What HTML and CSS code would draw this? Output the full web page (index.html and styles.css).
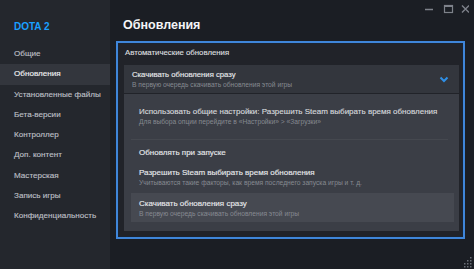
FILE: index.html
```html
<!DOCTYPE html>
<html lang="ru">
<head>
<meta charset="utf-8">
<link rel="stylesheet" href="styles.css">
</head>
<body>
<div class="app">
  <aside class="sidebar">
    <div class="game">DOTA 2</div>
    <nav class="nav">
      <div class="nav-item">Общие</div>
      <div class="nav-item active">Обновления</div>
      <div class="nav-item">Установленные файлы</div>
      <div class="nav-item">Бета-версии</div>
      <div class="nav-item">Контроллер</div>
      <div class="nav-item">Доп. контент</div>
      <div class="nav-item">Мастерская</div>
      <div class="nav-item">Запись игры</div>
      <div class="nav-item">Конфиденциальность</div>
    </nav>
  </aside>
  <main class="main">
    <h1 class="title">Обновления</h1>
    <section class="box">
      <div class="label">Автоматические обновления</div>
      <div class="dropdown">
        <div class="opt-title">Скачивать обновления сразу</div>
        <div class="opt-sub">В первую очередь скачивать обновления этой игры</div>
        <svg class="chevron" width="10" height="7" viewBox="0 0 10 7"><path d="M1.5 1.5 L5 5 L8.5 1.5" fill="none" stroke="#2f8fe6" stroke-width="2"/></svg>
      </div>
      <div class="menu">
        <div class="item first">
          <div class="opt-title">Использовать общие настройки: Разрешить Steam выбирать время обновления</div>
          <div class="opt-sub">Для выбора опции перейдите в «Настройки» &gt; «Загрузки»</div>
        </div>
        <div class="sep"></div>
        <div class="item">
          <div class="opt-title">Обновлять при запуске</div>
        </div>
        <div class="item">
          <div class="opt-title">Разрешить Steam выбирать время обновления</div>
          <div class="opt-sub">Учитываются такие факторы, как время последнего запуска игры и т. д.</div>
        </div>
        <div class="item selected">
          <div class="opt-title">Скачивать обновления сразу</div>
          <div class="opt-sub">В первую очередь скачивать обновления этой игры</div>
        </div>
      </div>
    </section>
  </main>
  <div class="controls">
    <svg width="48" height="12" viewBox="0 0 48 12">
      <path d="M4 6.5 H12" stroke="#7e828a" stroke-width="1.5"/>
      <rect x="23.5" y="2.5" width="8" height="7" fill="none" stroke="#7e828a" stroke-width="1.2"/>
      <path d="M23.5 3.2 H31.5" stroke="#7e828a" stroke-width="1.6"/>
      <path d="M41 2.5 L48 9.5 M48 2.5 L41 9.5" stroke="#7e828a" stroke-width="1.4"/>
    </svg>
  </div>
  <svg class="grip" width="10" height="12" viewBox="0 0 10 12">
    <g fill="#6b6f77">
      <rect x="8" y="1" width="1.5" height="1.5"/>
      <rect x="5" y="4" width="1.5" height="1.5"/><rect x="8" y="4" width="1.5" height="1.5"/>
      <rect x="2" y="7" width="1.5" height="1.5"/><rect x="5" y="7" width="1.5" height="1.5"/><rect x="8" y="7" width="1.5" height="1.5"/>
      <rect x="2" y="10" width="1.5" height="1.5"/><rect x="5" y="10" width="1.5" height="1.5"/><rect x="8" y="10" width="1.5" height="1.5"/>
    </g>
  </svg>
</div>
</body>
</html>
```
FILE: styles.css
```css
* { box-sizing: border-box; margin: 0; padding: 0; }
html, body { width: 474px; height: 269px; overflow: hidden; }
body {
  background: #1b1e24;
  font-family: "Liberation Sans", Arial, sans-serif;
  color: #dfe1e4;
}
.app {
  position: relative;
  display: flex;
  width: 474px;
  height: 269px;
}
.sidebar {
  width: 110px;
  flex: none;
  background: #24272d;
  padding-top: 20px;
}
.game {
  padding-left: 14px;
  font-size: 10px;
  line-height: 14px;
  font-weight: bold;
  color: #1a9fff;
  margin-bottom: 10px;
}
.nav-item {
  height: 20.25px;
  line-height: 20.25px;
  padding-left: 14px;
  font-family: "Liberation Sans Narrow", "Liberation Sans", sans-serif;
  font-size: 8.1px;
  color: #bcbfc4;
  -webkit-text-stroke: 0.15px currentColor;
  white-space: nowrap;
}
.nav-item.active {
  background: #33363d;
  color: #f0f1f3;
}
.main {
  width: 364px;
  flex: none;
  min-width: 0;
  padding: 16px 9px 0 6px;
  display: flex;
  flex-direction: column;
}
.title {
  font-size: 12.5px;
  line-height: 18px;
  font-weight: bold;
  color: #f4f5f7;
  padding-left: 7px;
  margin-bottom: 7px;
}
.box {
  height: 198px;
  border: 2px solid #3f86da;
  box-shadow: inset 0 0 0 1px #1a2432;
  background: #212329;
  padding: 4px 4px 6px 6px;
}
.label {
  font-family: "Liberation Sans Narrow", "Liberation Sans", sans-serif;
  font-size: 7.8px;
  line-height: 12px;
  color: #dadcdf;
  -webkit-text-stroke: 0.15px currentColor;
  padding-left: 1px;
  margin-bottom: 6px;
}
.dropdown {
  position: relative;
  height: 28px;
  background: #33363d;
  padding: 5px 8px 0 8px;
}
.opt-title {
  font-family: "Liberation Sans Narrow", "Liberation Sans", sans-serif;
  font-size: 8px;
  line-height: 10px;
  color: #e6e8eb;
  -webkit-text-stroke: 0.15px currentColor;
  white-space: nowrap;
}
.dropdown .opt-title { font-size: 7.7px; }
.opt-sub {
  font-size: 6.7px;
  line-height: 9px;
  color: #868a91;
  white-space: nowrap;
}
.chevron {
  position: absolute;
  right: 10px;
  top: 10.5px;
}
.menu {
  margin-top: 1px;
  background: #3b3e46;
  padding: 7px 5px 0 7px;
  height: 137px;
}
.item {
  padding: 5px 8px;
}
.item.first {
  padding: 6px 8px 4px 8px;
}
.item.first .opt-title { color: #d4d6da; }
.sep {
  height: 1px;
  background: #45484f;
  margin: 9px 6px 3px 0;
}
.item.selected {
  background: #464951;
  margin-top: 1px;
  padding: 6px 8px 4px 8px;
}
.controls {
  position: absolute;
  top: 3px;
  right: 5px;
  line-height: 0;
}
.grip {
  position: absolute;
  right: 2px;
  bottom: 1px;
}
```
